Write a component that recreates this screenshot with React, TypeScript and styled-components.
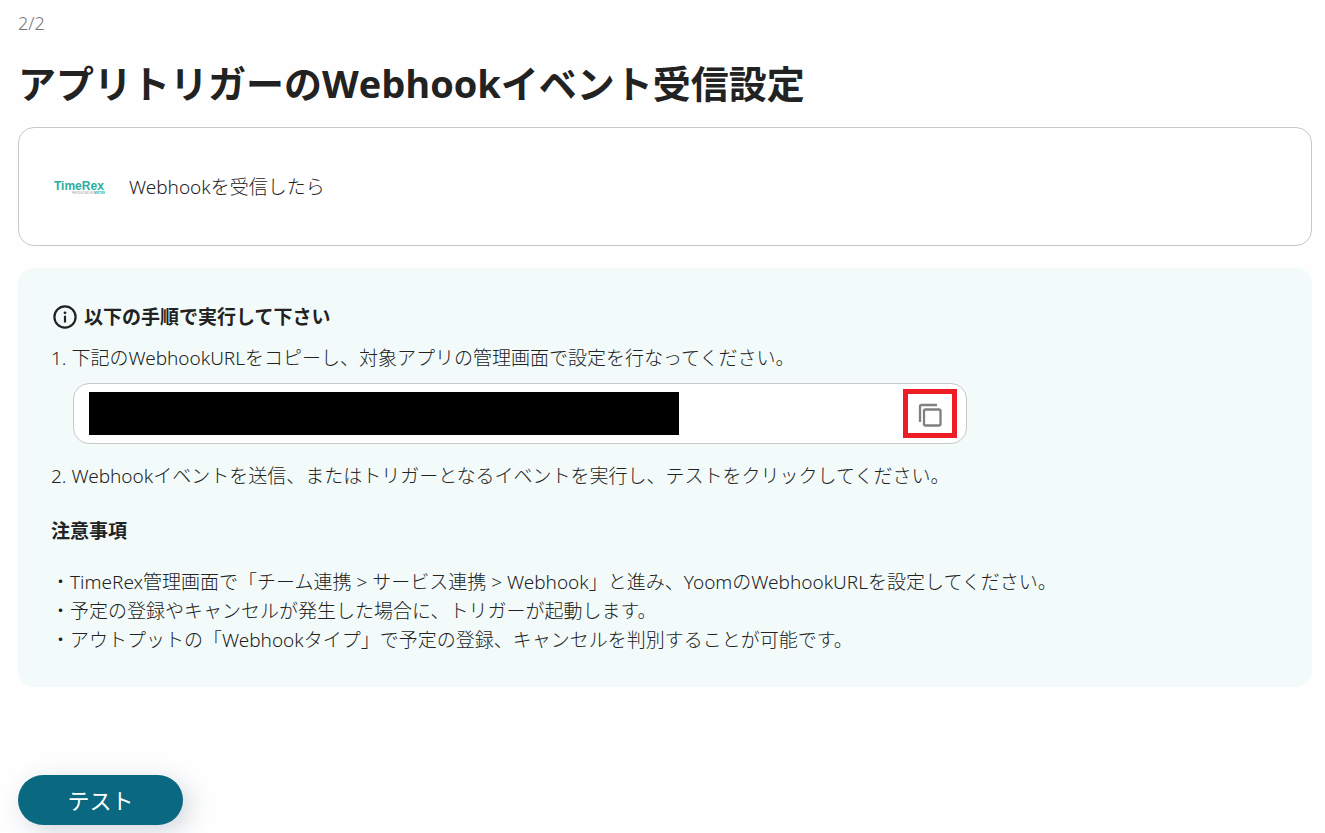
import React from "react";
import styled, { createGlobalStyle } from "styled-components";

const GlobalStyle = createGlobalStyle`
  * { box-sizing: border-box; }
  body {
    margin: 0;
    background: #fefefe;
    color: #222222;
    font-family: "Noto Sans", "Noto Sans CJK JP", sans-serif;
    font-size: 19px;
    font-weight: 300;
    line-height: 29px;
  }
`;

const Page = styled.main`
  display: flex;
  flex-direction: column;
  align-items: stretch;
  padding: 9px 13px 8px 18px;
`;

const StepCount = styled.p`
  margin: 0;
  color: #777777;
  font-size: 18px;
`;

const Title = styled.h1`
  margin: 16px 0 15px;
  font-family: "Open Sans", "Noto Sans CJK JP", sans-serif;
  font-size: 38px;
  line-height: 58px;
  font-weight: 700;
`;

const TriggerCard = styled.section`
  display: flex;
  align-items: center;
  gap: 24px;
  min-height: 119px;
  padding: 2px 34px 0;
  border: 1px solid #c8c8c8;
  border-radius: 16px;
  background: #ffffff;
`;

const Logo = styled.svg`
  width: 52px;
  height: 18px;
  flex: none;
`;

const GuidePanel = styled.section`
  margin-top: 22px;
  padding: 35px 33px 32px;
  border-radius: 16px;
  background: #f2fbfa;
`;

const GuideHeading = styled.h2`
  display: flex;
  align-items: center;
  gap: 7px;
  margin: 0 0 12px;
  font-size: 19px;
  line-height: 29px;
  font-weight: 700;
`;

const InfoIcon = styled.svg`
  width: 26px;
  height: 26px;
  flex: none;
`;

const Line = styled.p`
  margin: 0;
`;

const UrlField = styled.div`
  display: flex;
  align-items: center;
  justify-content: space-between;
  max-width: 894px;
  height: 61px;
  margin: 10px 0 18px 22px;
  padding: 0 9px 0 15px;
  border: 1px solid #c8c8c8;
  border-radius: 16px;
  background: #ffffff;
`;

const UrlInput = styled.input`
  width: 590px;
  min-width: 0;
  height: 43px;
  padding: 0;
  border: 0;
  border-radius: 0;
  background: #000000;
  color: #000000;
`;

const CopyButton = styled.button`
  display: flex;
  align-items: center;
  justify-content: center;
  width: 54px;
  height: 49px;
  padding: 2px 0 0;
  border: 5px solid #ee1c24;
  background: #ffffff;
  color: #808080;
  cursor: pointer;
`;

const NotesHeading = styled.h3`
  margin: 26px 0 22px;
  font-size: 19px;
  line-height: 29px;
  font-weight: 700;
`;

const NotesList = styled.ul`
  margin: 0;
  padding: 0;
  list-style: none;
`;

const TestButton = styled.button`
  align-self: flex-start;
  width: 165px;
  height: 50px;
  margin-top: 88px;
  padding: 0;
  border: 0;
  border-radius: 25px;
  background: #0b6881;
  box-shadow: 6px 6px 24px rgba(30, 60, 90, 0.2);
  color: #ffffff;
  font-family: inherit;
  font-size: 22px;
  line-height: 32px;
  cursor: pointer;
`;

const notes = [
  "・TimeRex管理画面で「チーム連携 > サービス連携 > Webhook」と進み、YoomのWebhookURLを設定してください。",
  "・予定の登録やキャンセルが発生した場合に、トリガーが起動します。",
  "・アウトプットの「Webhookタイプ」で予定の登録、キャンセルを判別することが可能です。",
];

export default function App() {
  return (
    <>
      <GlobalStyle />
      <Page>
        <StepCount>2/2</StepCount>
        <Title>アプリトリガーのWebhookイベント受信設定</Title>

        <TriggerCard>
          <Logo viewBox="0 0 52 18" role="img" aria-label="TimeRex">
            <text x="1" y="11" fontFamily="Liberation Sans, sans-serif" fontSize="12" fontWeight="700" fill="#2bae9e">
              TimeRex
            </text>
            <text x="19" y="15" fontFamily="Liberation Sans, sans-serif" fontSize="3" fill="#999999">
              PRODUCED BY
            </text>
            <text x="41" y="15" fontFamily="Liberation Sans, sans-serif" fontSize="3" fontWeight="700" fill="#2bae9e">
              MIXTEN
            </text>
          </Logo>
          <span>Webhookを受信したら</span>
        </TriggerCard>

        <GuidePanel>
          <GuideHeading>
            <InfoIcon viewBox="0 0 26 26" fill="none" aria-hidden="true">
              <circle cx="14" cy="12" r="10.6" stroke="#222222" strokeWidth="2.2" />
              <circle cx="14" cy="7.8" r="1.4" fill="#222222" />
              <path d="M14 10.7v6.8" stroke="#222222" strokeWidth="2.2" />
            </InfoIcon>
            以下の手順で実行して下さい
          </GuideHeading>
          <Line>1. 下記のWebhookURLをコピーし、対象アプリの管理画面で設定を行なってください。</Line>
          <UrlField>
            <UrlInput type="text" readOnly aria-label="WebhookURL" />
            <CopyButton type="button" aria-label="コピー">
              <svg width="24" height="24" viewBox="0 0 24 24" fill="none" stroke="currentColor" strokeWidth="2.3" aria-hidden="true">
                <path d="M2 19V3.5A1.5 1.5 0 0 1 3.5 2H19" />
                <rect x="6" y="6.5" width="16.5" height="16" rx="1.5" />
              </svg>
            </CopyButton>
          </UrlField>
          <Line>2. Webhookイベントを送信、またはトリガーとなるイベントを実行し、テストをクリックしてください。</Line>
          <NotesHeading>注意事項</NotesHeading>
          <NotesList>
            {notes.map((note) => (
              <li key={note}>{note}</li>
            ))}
          </NotesList>
        </GuidePanel>

        <TestButton type="button">テスト</TestButton>
      </Page>
    </>
  );
}
